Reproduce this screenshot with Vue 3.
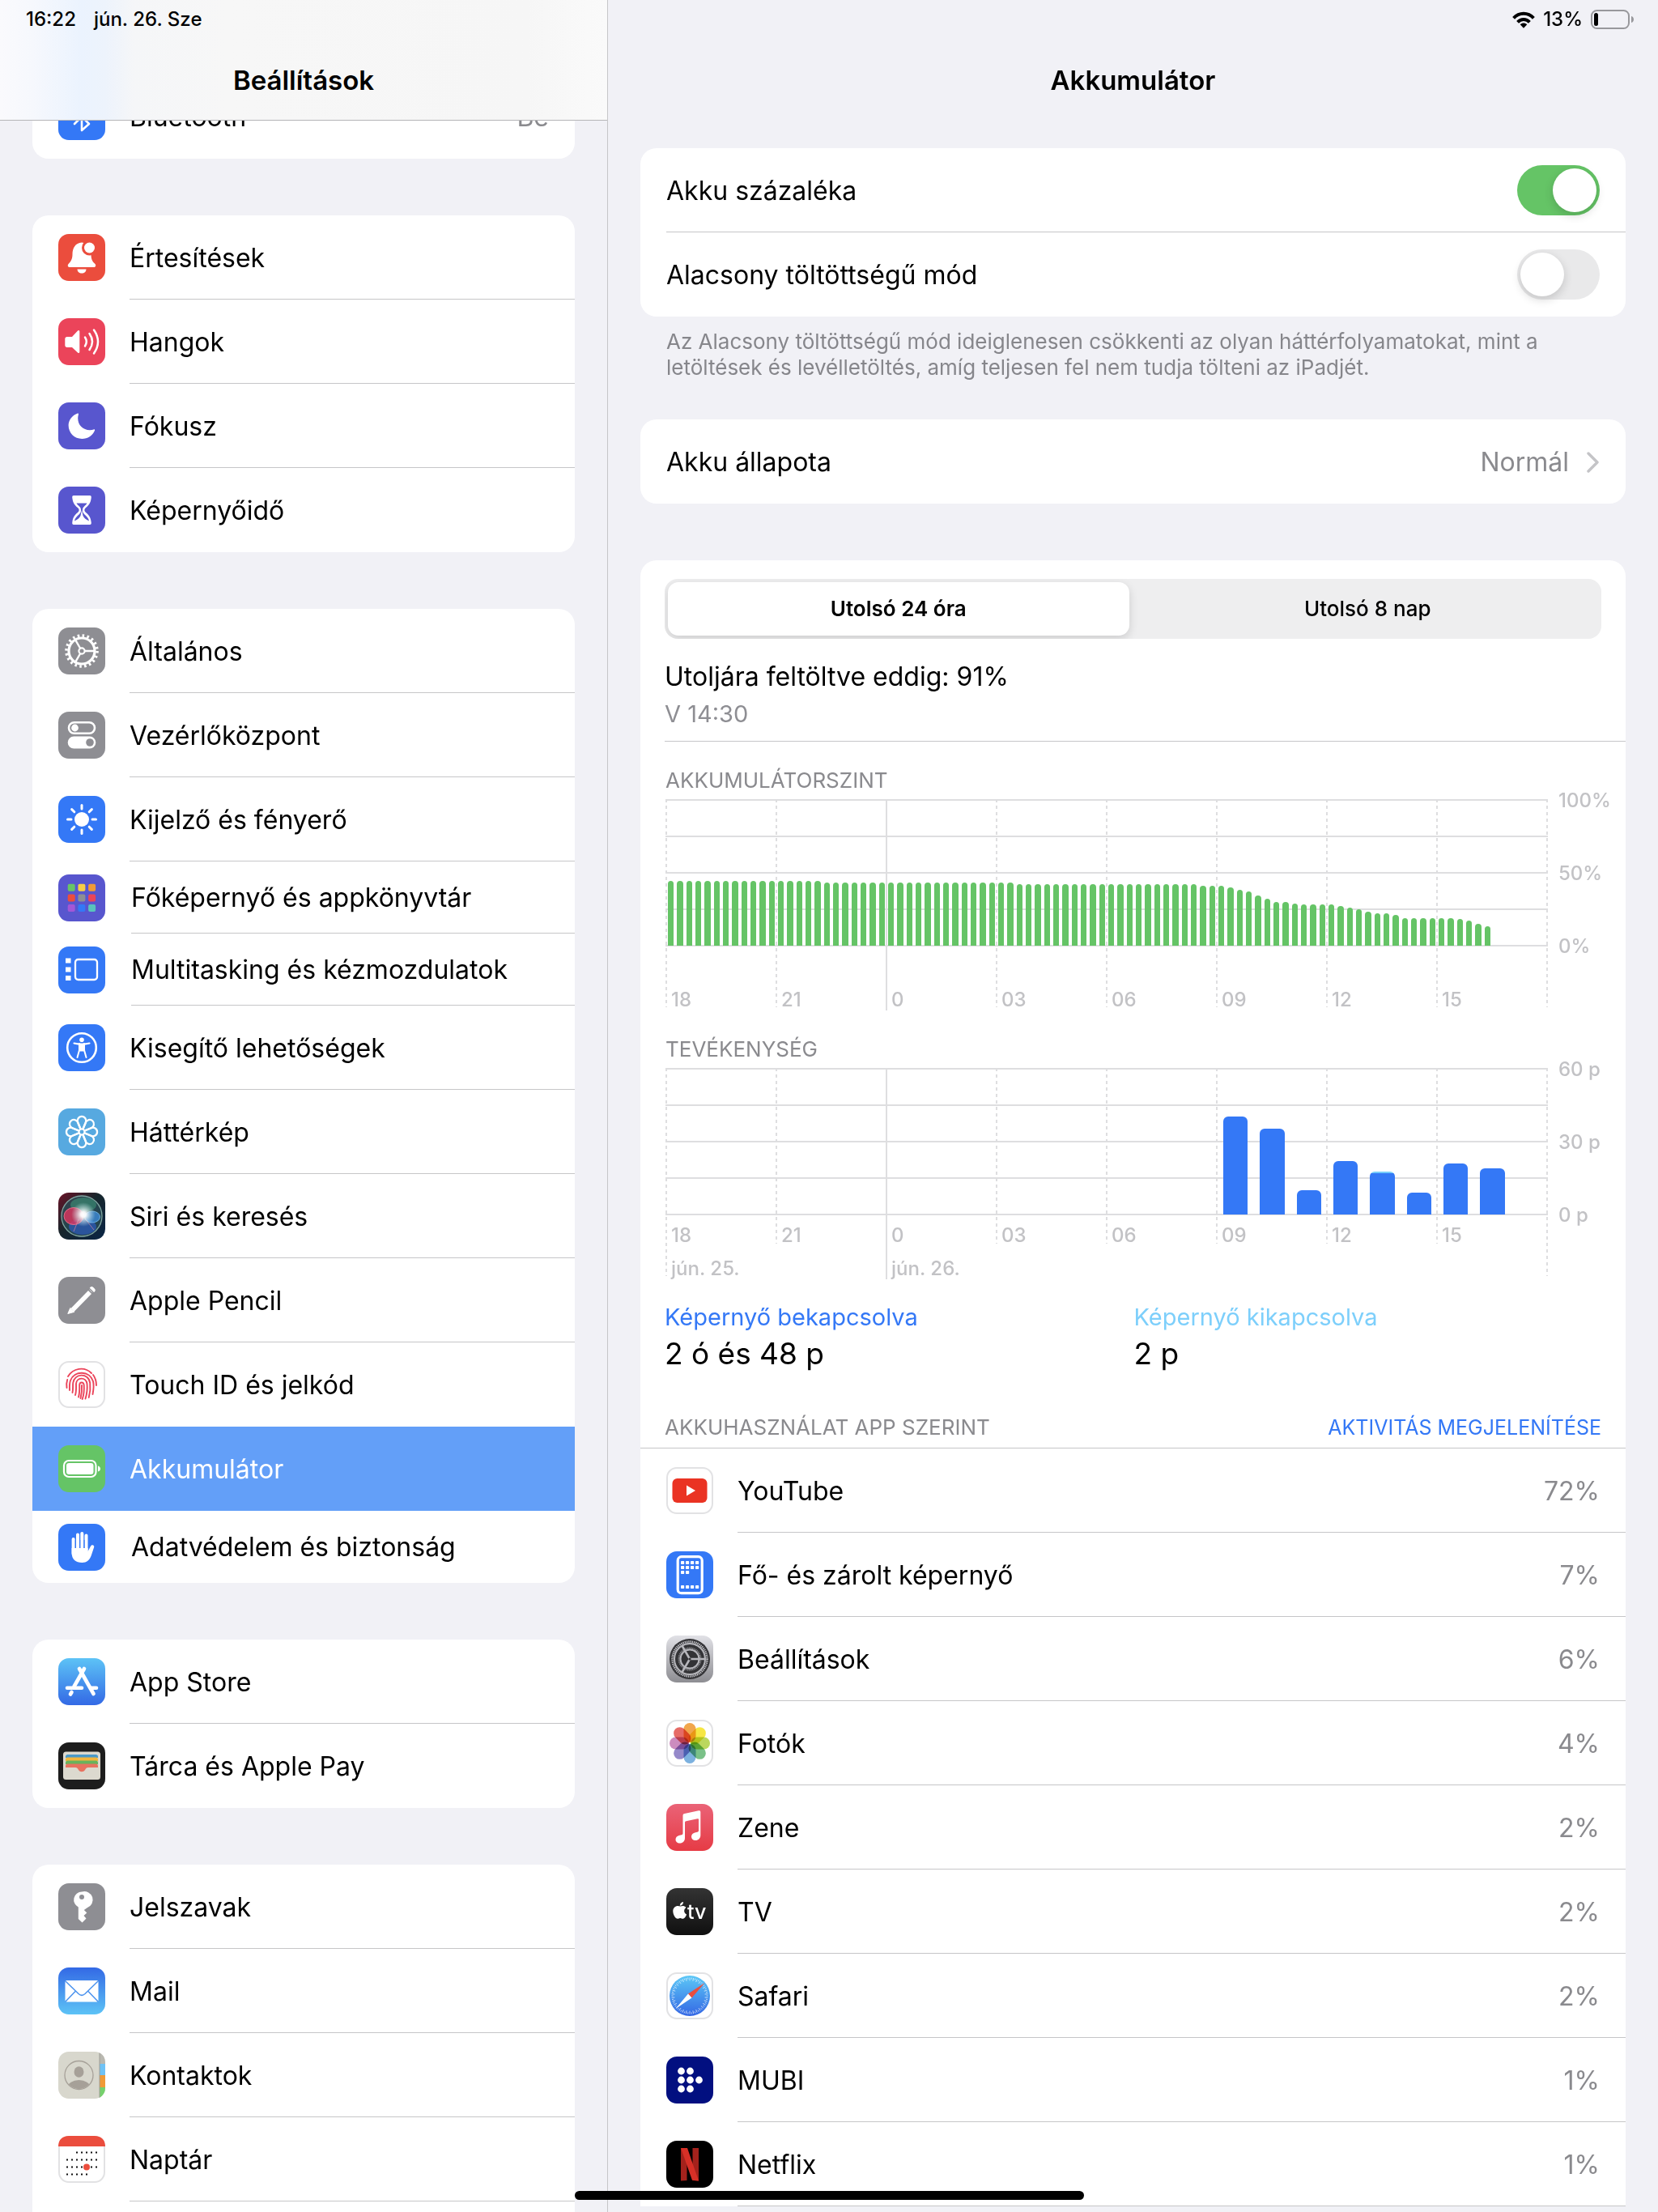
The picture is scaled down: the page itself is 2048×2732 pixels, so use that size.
<script setup>
import { ref } from 'vue'

const range = (n) => Array.from({ length: n }, (_, i) => i)
const rep = (n, v) => Array(n).fill(v)
const spin = (n, fn) => range(n).map((i) => fn((i * 360) / n, i)).join('')
const tile = (fill) => `<rect width="58" height="58" rx="13" fill="${fill}"/>`
const paperTile = '<rect x="1" y="1" width="56" height="56" rx="12" fill="#fff" stroke="#e2e2e4" stroke-width="2"/>'

const blue = '#3478f6'
const gray = '#8e8e93'
const indigo = '#5856ce'

const icons = {
  bluetooth: `${tile(blue)}<path d="M20 20l18 18-9 8V12l9 8-18 18" fill="none" stroke="#fff" stroke-width="2.6" stroke-linejoin="round" stroke-linecap="round"/>`,
  bell: `${tile('#eb4d3d')}<g fill="#fff"><path d="M29 10.500c-8 .5-11.500 7-11.500 14.500 0 6-2 9-4.500 11.500-2 2-1.500 4.500 1 4.500h30c2.500 0 3-2.500 1-4.500-3-2.500-4.500-5.500-4.500-11.500 0-7.500-3.500-14-11.500-14.500z"/><path d="M23.500 43.500h11c0 3-2.500 5-5.500 5s-5.500-2-5.500-5z"/></g><circle cx="38.500" cy="17" r="9.500" fill="#eb4d3d"/><circle cx="38.500" cy="17" r="6.500" fill="#fff"/>`,
  sound: `${tile('#eb445a')}<path d="M11 23h6l7-7.500c1-1 2.300-.5 2.300 1v25c0 1.500-1.300 2-2.300 1L17 36h-6c-1.700 0-2.700-1-2.700-2.700v-7.500C8.300 24 9.300 23 11 23z" fill="#fff"/><path d="M33 23.500q3.600 5.500 0 11M38.500 19q7 10 0 20M44 14.500q10 14.500 0 29" fill="none" stroke="#fff" stroke-width="2.500" stroke-linecap="round"/>`,
  moon: `${tile(indigo)}<path d="M23.500 13.700c1-.5 1.700.1 1.400 1.200-.4 1.300-.7 3-.7 4.600 0 8.500 6.300 14.700 14.800 14.700 1.700 0 3.400-.3 4.700-.8 1-.4 1.700.3 1.300 1.300-2.600 6.300-8.700 10.300-15.700 10.300-9.400 0-16.700-7.300-16.700-16.700 0-6.500 4.500-12.300 10.900-14.600z" fill="#fff"/>`,
  hourglass: `${tile(indigo)}<path d="M19 11h20c1.500 0 2 1 1.700 3-.8 6.500-3 9-6.700 12-2.200 1.800-2.200 4.200 0 6 3.700 3 5.900 5.500 6.700 12 .3 2-.2 3-1.700 3H19c-1.500 0-2-1-1.700-3 .8-6.500 3-9 6.700-12 2.200-1.800 2.200-4.200 0-6-3.700-3-5.900-5.500-6.700-12-.3-2 .2-3 1.700-3z" fill="#fff"/><path d="M22.500 20.500h13c-1 1.700-2.300 2.800-3.500 4-1.500 1.300-2 2.500-2 4.500s.5 3.500 2 5c3 2.500 5.500 5 6 8.500-3-1.500-6-3-7.500-6.500l-1.500-7-1.500 7C26 39.500 23 41 20 42.500c.5-3.500 3-6 6-8.500 1.500-1.500 2-3 2-5s-.5-3.200-2-4.500c-1.200-1.200-2.500-2.300-3.500-4z" fill="${indigo}"/>`,
  gear: `${tile(gray)}<g fill="none" stroke="#fff"><circle cx="29" cy="29" r="16" stroke-width="3.200"/><circle cx="29" cy="29" r="19" stroke-width="3.600" stroke-dasharray="2.600 3.370"/><circle cx="29" cy="29" r="3.600" stroke-width="2.200"/><path d="M33 29h12M27 25.500l-6-10.400M27 32.500l-6 10.400" stroke-width="2.400"/></g>`,
  switches: `${tile(gray)}<rect x="13" y="13.200" width="32" height="13.600" rx="6.800" fill="none" stroke="#fff" stroke-width="2.600"/><circle cx="20.500" cy="20" r="4.400" fill="#fff"/><rect x="11.700" y="30.500" width="34.600" height="15" rx="7.500" fill="#fff"/><circle cx="39" cy="38" r="4.800" fill="${gray}"/>`,
  sun: `${tile(blue)}<circle cx="29" cy="29" r="9" fill="#fff"/>${spin(8, (a) => `<path d="M29 11.500v4.500" transform="rotate(${a} 29 29)" stroke="#fff" stroke-width="3" stroke-linecap="round"/>`)}`,
  grid: `${tile(indigo)}${['#68c466', '#f7ce46', '#f19a37', '#eb4d3d', '#8e8e93', '#eb445a', '#a357d7', '#3478f6', '#59c4bc'].map((c, i) => `<rect x="${11.700 + (i % 3) * 12.700}" y="${11.700 + Math.floor(i / 3) * 12.700}" width="9" height="9" rx="2" fill="${c}"/>`).join('')}`,
  multitask: `${tile(blue)}<path d="M9 14.500h6.500v6H9zM9 25.500h6.500v6H9zM9 36h6.500v6H9z" fill="#fff"/><rect x="21" y="16" width="27" height="25" rx="3.500" fill="none" stroke="#fff" stroke-width="2.300"/>`,
  access: `${tile(blue)}<circle cx="29" cy="29" r="17.800" fill="none" stroke="#fff" stroke-width="2.600"/><circle cx="29" cy="19.300" r="2.800" fill="#fff"/><path d="M19.500 23.500c6 1.500 13 1.500 19 0" stroke="#fff" stroke-width="2.200" fill="none" stroke-linecap="round"/><path d="M32 24v8l2.500 9M26 24v8l-2.500 9M26.300 32.500h5.400" stroke="#fff" stroke-width="2" fill="none" stroke-linecap="round" stroke-linejoin="round"/><path d="M25.500 24h7v8.500h-7z" fill="#fff"/>`,
  flower: `${tile('#57a9e0')}<g fill="none" stroke="#fff" stroke-width="2.300" stroke-linejoin="round">${spin(8, (a) => `<path d="M27.500 25L24.200 17.500a5.300 5.300 0 1 1 9.600 0L30.500 25" transform="rotate(${a} 29 29)"/>`)}<circle cx="29" cy="29" r="3.600"/></g>`,
  siri: `<defs><linearGradient id="siriBg" x1="0" y1="0" x2="1" y2="1"><stop offset="0" stop-color="#6a1226"/><stop offset=".45" stop-color="#17262c"/><stop offset="1" stop-color="#0a2546"/></linearGradient><radialGradient id="siriGlow"><stop offset="0" stop-color="#fff"/><stop offset=".22" stop-color="#fff" stop-opacity=".95"/><stop offset="1" stop-color="#bfe6ea" stop-opacity="0"/></radialGradient></defs>${tile('url(#siriBg)')}<circle cx="29" cy="29" r="25" fill="#2b4f58" fill-opacity=".75" stroke="#7fa5a0" stroke-width="1.300"/><ellipse cx="31" cy="15" rx="16" ry="9" fill="#3f9a7c" fill-opacity=".55"/><ellipse cx="30" cy="42" rx="17" ry="10" fill="#2f5fd0" fill-opacity=".6"/><ellipse cx="19" cy="29" rx="12" ry="10.500" fill="#e0355f" fill-opacity=".8" stroke="#f27a94" stroke-width=".8"/><ellipse cx="42" cy="30" rx="9.500" ry="7" fill="#3f8fe0" fill-opacity=".75" stroke="#7cc0ee" stroke-width=".8"/><path d="M33 32l11 14M25 33l-6 15" stroke="#e88aa0" stroke-opacity=".6"/><circle cx="31" cy="27" r="15" fill="url(#siriGlow)"/>`,
  pencil: `${tile(gray)}<path d="M15.500 39L37 17l4 4-21.500 22z" fill="#fff"/><path d="M11.800 45.500l3-7 5 4.800z" fill="#fff" stroke="#fff" stroke-linejoin="round"/><path d="M41.300 14.900l1.500 1.500" stroke="#fff" stroke-width="5.600" stroke-linecap="round"/><path d="M37.500 13.500l7 7" stroke="${gray}" stroke-width="1.400"/>`,
  touch: `${paperTile}<g fill="none" stroke="#eb445a" stroke-width="1.900" stroke-linecap="round"><path d="M12 19c6-10 20-13 29-4"/><path d="M43 17c3 4 4 8 4 13"/><path d="M10.500 33c-.5-4-.3-7 .7-10"/><path d="M14 36c0-4-.5-8 1-12 5-13 24-12 28 1 1 4 .8 9-.5 16"/><path d="M17.500 39c1-5 .3-8 .7-12 1.500-12 19-13 21 0 .7 6 .2 12-1.500 18"/><path d="M21 42c1.500-5 1-10 1-14 .5-8 12-9 13.500 0 .6 6 0 12-2 18.500"/><path d="M25 44.500c1.500-5 1.300-11 1.200-15 .2-4 5-4 5.500 0 .4 6 0 12-2 17.500"/><path d="M29 30c.3 6-.3 11-1.500 16"/></g>`,
  battery: `${tile('#65c466')}<rect x="7" y="19" width="39.500" height="20" rx="6" fill="none" stroke="#fff" stroke-width="2.200"/><rect x="10" y="22" width="33.500" height="14" rx="3.300" fill="#fff"/><path d="M49 25.500c4 1 4 6 0 7z" fill="#fff"/>`,
  hand: `${tile(blue)}<g stroke="#fff" stroke-width="4" stroke-linecap="round" fill="none"><path d="M18.600 19v18M24 13.500V32M29.300 12v20M34.500 14.500V33"/></g><path d="M16.600 30h20v4l3.500-6.500c1.300-2.300 4.700-1.300 4.100 1.300l-3.500 10.500C38.700 45 35 48 29.500 48 21.500 48 16.600 44 16.600 36z" fill="#fff"/><path d="M21.300 20v10M26.700 20v10M32 20v10" stroke="${blue}" stroke-width="1"/>`,
  store: `<defs><linearGradient id="storeBg" x1="0" y1="0" x2="0" y2="1"><stop offset="0" stop-color="#5dc3f6"/><stop offset="1" stop-color="#3369e5"/></linearGradient></defs>${tile('url(#storeBg)')}<g stroke="#fff" stroke-width="4.600" stroke-linecap="round" fill="none"><path d="M32 13L19.500 35"/><path d="M26 13l17.500 31"/><path d="M11 36.700h18M40 36.700h7"/><path d="M16.500 42l-1.500 2.500"/></g>`,
  wallet: `${tile('#1d1d1d')}<rect x="6" y="11.500" width="46" height="34.500" rx="3.500" fill="#dcd9cf"/><path d="M9 19v-1.500c0-1.500 1-2.500 2.500-2.500h35c1.500 0 2.500 1 2.500 2.500V19z" fill="#4a9ac9"/><path d="M9 23v-2c0-1.500 1-2.500 2.500-2.500h35c1.500 0 2.500 1 2.500 2.500v2z" fill="#f2b53c"/><path d="M9 27v-2c0-1.500 1-2.500 2.500-2.500h35c1.500 0 2.500 1 2.500 2.500v2z" fill="#68b35c"/><path d="M9 31v-2c0-1.500 1-2.500 2.500-2.500h35c1.500 0 2.500 1 2.500 2.500v2H37c-2 0-3 1.300-4 3-1.800 3-6.200 3-8 0-1-1.700-2-3-4-3z" fill="#e8715f"/>`,
  key: `${tile(gray)}<path d="M29 10.500a10 10 0 0 0-4.200 19V44l4.700 4.500 5-5-3-3.500 3.800-3.500-3.500-3.500 3.500-2.500a10 10 0 0 0-6.300-20z" fill="#fff"/><circle cx="29" cy="17" r="3" fill="${gray}"/>`,
  mail: `<defs><linearGradient id="mailBg" x1="0" y1="0" x2="0" y2="1"><stop offset="0" stop-color="#3369e5"/><stop offset="1" stop-color="#5dc3f6"/></linearGradient></defs>${tile('url(#mailBg)')}<rect x="8.500" y="16" width="41" height="26.500" rx="2" fill="#fff"/><path d="M9 17l16 15.500c2.500 2.300 5.500 2.300 8 0L49 17M9 42l12.500-13M49 42L36.500 29" fill="none" stroke="#4a92ee" stroke-width="1.500"/>`,
  contacts: `<defs><clipPath id="contactsClip"><rect width="58" height="58" rx="13"/></clipPath><clipPath id="contactsFace"><circle cx="25.500" cy="29" r="17"/></clipPath></defs><g clip-path="url(#contactsClip)"><path d="M0 0h58v58H0z" fill="#d8d7cd"/><path d="M51 0h7v15h-7z" fill="#b9b8b0"/><path d="M51 15h7v14h-7z" fill="#6fc2f5"/><path d="M51 29h7v15h-7z" fill="#f09a37"/><path d="M51 44h7v14h-7z" fill="#75d16c"/><path d="M51 0v58" stroke="#9d9c95"/></g><circle cx="25.500" cy="29" r="17.500" fill="none" stroke="#a6a098" stroke-width="1.300"/><g clip-path="url(#contactsFace)" fill="#a6a098"><ellipse cx="25.500" cy="25" rx="6" ry="6.800"/><ellipse cx="25.500" cy="44" rx="14" ry="9"/></g>`,
  calendar: `${paperTile}<path d="M0 13C0 5 5 0 13 0h32c8 0 13 5 13 13z" fill="#eb4d3d"/><g fill="#111">${[[22, 20.500, 5], [10, 29.500, 7], [10, 38.500, 7], [10, 47.500, 5]].map(([x, y, n]) => range(n).map((i) => `<rect x="${x + i * 6}" y="${y - 1}" width="2" height="2"/>`).join('')).join('')}</g><circle cx="35" cy="38.500" r="4" fill="#eb4d3d"/>`,
  youtube: `${paperTile}<rect x="7.500" y="14" width="43" height="30" rx="6" fill="#ea3323"/><path d="M25 22.500v13L36 29z" fill="#fff"/>`,
  home: `${tile(blue)}<rect x="14.200" y="6.700" width="30" height="45" rx="4.500" fill="none" stroke="#fff" stroke-width="3.200"/><g fill="#fff">${[[0, 0], [1, 0], [2, 0], [3, 0], [0, 1], [1, 1], [2, 1], [3, 1], [0, 2], [1, 2], [0, 5], [1, 5], [2, 5], [3, 5]].map(([x, y]) => `<rect x="${18 + x * 6}" y="${12 + y * 6}" width="4.200" height="4" rx=".8"/>`).join('')}</g>`,
  settings: `<defs><linearGradient id="setBg" x1="0" y1="0" x2="0" y2="1"><stop offset="0" stop-color="#e1e1e6"/><stop offset="1" stop-color="#8d8d92"/></linearGradient></defs>${tile('url(#setBg)')}<circle cx="29" cy="29" r="25" fill="#333336"/><circle cx="29" cy="29" r="21.500" fill="none" stroke="#c3c3c8" stroke-width="2.500" stroke-dasharray="1.300 1"/><circle cx="29" cy="29" r="19" fill="none" stroke="#b7b7bc" stroke-width="2"/><circle cx="29" cy="29" r="13" fill="none" stroke="#8a8a8e" stroke-width="3" stroke-dasharray="1.200 .8"/><circle cx="29" cy="29" r="11.500" fill="none" stroke="#b7b7bc" stroke-width="2"/><g stroke="#b7b7bc" stroke-width="2.600"><path d="M29 29h19M29 29l-9.500-16.400M29 29l-9.500 16.400"/></g><circle cx="29" cy="29" r="1.600" fill="#333336"/>`,
  photos: `${paperTile}<g style="isolation:isolate">${['#f09c38', '#f5e32f', '#b4d34d', '#6cba7b', '#6ea9dc', '#8a7cc4', '#c77fb8', '#e35b55'].map((c, i) => `<rect x="21.500" y="4" width="15" height="24" rx="7.500" fill="${c}" fill-opacity=".9" style="mix-blend-mode:multiply" transform="rotate(${i * 45} 29 29)"/>`).join('')}</g>`,
  music: `<defs><linearGradient id="musicBg" x1="0" y1="0" x2="0" y2="1"><stop offset="0" stop-color="#ea6377"/><stop offset="1" stop-color="#e63b45"/></linearGradient></defs>${tile('url(#musicBg)')}<path d="M20.500 14.500c0-1.500.6-2.200 2-2.500l17.500-3.700c1.300-.3 2.300.4 2.300 1.700v28.500c0 4-2.600 6.500-6.300 6.500-3 0-5-2-5-4.500 0-2.800 2-4.500 5-5.200l2.300-.5c1.200-.3 1.700-.8 1.700-2V19.500c0-1-.5-1.400-1.500-1.200l-14 3c-1 .2-1.500.7-1.500 1.700v19c0 4-2.600 6.500-6.300 6.500-3 0-5.200-2-5.200-4.500 0-2.800 2-4.500 5-5.200l2.300-.5c1.200-.3 1.700-.8 1.700-2z" fill="#fff"/>`,
  tv: `<defs><linearGradient id="tvBg" x1="0" y1="0" x2="0" y2="1"><stop offset="0" stop-color="#333"/><stop offset="1" stop-color="#101010"/></linearGradient></defs>${tile('url(#tvBg)')}<path d="M17.500 22.600c2.200-1.200 5.200-.9 6.900 1.300-3.300 2-2.800 7 .7 8.500-.9 2.600-2.700 5.300-4.700 5.300-1.200 0-1.700-.8-3.200-.8s-2.100.8-3.200.8c-2.700 0-5.700-5.300-5.700-9.300 0-5.400 4.800-7.800 9.200-5.800z" fill="#fff"/><path d="M16.800 21.700c0-2.500 1.700-4.300 4.200-4.700.2 2.500-1.700 4.600-4.200 4.700z" fill="#fff"/><text x="26" y="37.500" font-family="Inter, sans-serif" font-size="25" font-weight="500" fill="#fff">tv</text>`,
  safari: `<defs><linearGradient id="safBg" x1="0" y1="0" x2="0" y2="1"><stop offset="0" stop-color="#5cc8f7"/><stop offset="1" stop-color="#3467e4"/></linearGradient></defs>${paperTile}<circle cx="29" cy="29" r="25" fill="url(#safBg)"/>${spin(60, (a, i) => `<path d="M29 6.500v${i % 2 ? 2 : 3.800}" transform="rotate(${a} 29 29)" stroke="#fff" stroke-width=".7" stroke-opacity=".9"/>`)}<path d="M47.500 13L27 26.500l4.500 5z" fill="#eb4d3d"/><path d="M11.500 45L27 26.500l4.500 5z" fill="#fff"/>`,
  mubi: `${tile('#020f80')}<g fill="#fff">${[[18.500, 18], [29.500, 18], [18.500, 29], [29.500, 29], [40.500, 29], [18.500, 40], [29.500, 40]].map(([x, y]) => `<circle cx="${x}" cy="${y}" r="4.400"/>`).join('')}</g>`,
  netflix: `${tile('#000')}<path d="M18 9h7.500v40l-7.500.5zM32.500 9H40v40.500l-7.500-.5z" fill="#a4221c"/><path d="M18 9h8l14 40.500-8-.8z" fill="#d73027"/>`
}

const groups = [
  [{ label: 'Bluetooth', icon: 'bluetooth', value: 'Be' }],
  [
    { label: 'Értesítések', icon: 'bell' },
    { label: 'Hangok', icon: 'sound' },
    { label: 'Fókusz', icon: 'moon' },
    { label: 'Képernyőidő', icon: 'hourglass' }
  ],
  [
    { label: 'Általános', icon: 'gear' },
    { label: 'Vezérlőközpont', icon: 'switches' },
    { label: 'Kijelző és fényerő', icon: 'sun' },
    { label: 'Főképernyő és appkönyvtár', icon: 'grid', compact: true },
    { label: 'Multitasking és kézmozdulatok', icon: 'multitask', compact: true },
    { label: 'Kisegítő lehetőségek', icon: 'access' },
    { label: 'Háttérkép', icon: 'flower' },
    { label: 'Siri és keresés', icon: 'siri' },
    { label: 'Apple Pencil', icon: 'pencil' },
    { label: 'Touch ID és jelkód', icon: 'touch' },
    { label: 'Akkumulátor', icon: 'battery', active: true },
    { label: 'Adatvédelem és biztonság', icon: 'hand', compact: true }
  ],
  [
    { label: 'App Store', icon: 'store' },
    { label: 'Tárca és Apple Pay', icon: 'wallet' }
  ],
  [
    { label: 'Jelszavak', icon: 'key' },
    { label: 'Mail', icon: 'mail' },
    { label: 'Kontaktok', icon: 'contacts' },
    { label: 'Naptár', icon: 'calendar' },
    { label: '', icon: '' }
  ]
]

const apps = [
  { name: 'YouTube', icon: 'youtube', share: 72 },
  { name: 'Fő- és zárolt képernyő', icon: 'home', share: 7 },
  { name: 'Beállítások', icon: 'settings', share: 6 },
  { name: 'Fotók', icon: 'photos', share: 4 },
  { name: 'Zene', icon: 'music', share: 2 },
  { name: 'TV', icon: 'tv', share: 2 },
  { name: 'Safari', icon: 'safari', share: 2 },
  { name: 'MUBI', icon: 'mubi', share: 1 },
  { name: 'Netflix', icon: 'netflix', share: 1 }
]

const hours = ['18', '21', '0', '03', '06', '09', '12', '15', '']
const dates = { 0: 'jún. 25.', 2: 'jún. 26.' }

// Charge in percent, one value per quarter of an hour from 18:00
const levels = [
  ...rep(17, 44), ...rep(21, 43), ...rep(20, 42), ...rep(3, 41),
  40, 38, 37, 34, 32, 30, 30, 29, ...rep(4, 28), 27, 26, 25, 23, 22, 22, 21,
  ...rep(6, 19), 18, 17, 15, 13
]

// Minutes of use in each hour, counted from 18:00
const activity = [
  ...rep(15, { on: 0, off: 0 }),
  { on: 40, off: 0 }, { on: 35, off: 0 }, { on: 10, off: 0 }, { on: 22, off: 0 },
  { on: 17, off: 1 }, { on: 9, off: 0 }, { on: 21, off: 0 }, { on: 19, off: 0 }
]

const period = ref('day')
const showPercent = ref(true)
const lowPower = ref(false)
</script>

<template>
  <div class="screen">
    <aside class="sidebar">
      <header class="sidebar-head">
        <div class="status"><span>16:22</span><span>jún. 26. Sze</span></div>
        <h1 class="title">Beállítások</h1>
      </header>
      <nav class="groups">
        <ul v-for="(group, g) in groups" :key="g" class="card">
          <li v-for="item in group" :key="item.icon">
            <a href="#" class="row" :class="{ compact: item.compact, active: item.active }">
              <svg class="icon" viewBox="0 0 58 58" aria-hidden="true" v-html="icons[item.icon] || ''"></svg>
              <span class="row-body">
                <span>{{ item.label }}</span>
                <span v-if="item.value" class="muted">{{ item.value }}</span>
              </span>
            </a>
          </li>
        </ul>
      </nav>
    </aside>

    <main class="detail">
      <header class="detail-head">
        <div class="status status-right">
          <svg width="28" height="21" viewBox="0 0 28 21" aria-hidden="true">
            <g fill="none" stroke="#000" stroke-width="4">
              <path d="M1.600 8.300C8.500 1 19.500 1 26.400 8.300" />
              <path d="M6.600 13.300c4.200-4.300 10.600-4.300 14.800 0" />
            </g>
            <path d="M14 20.800l-4.300-4.500c2.500-2.300 6.100-2.300 8.600 0z" />
          </svg>
          <span>13%</span>
          <svg width="54" height="24" viewBox="0 0 54 24" aria-hidden="true">
            <rect x="1" y="1" width="46" height="22" rx="6.500" fill="none" stroke="#98989c" stroke-width="2" />
            <rect x="4" y="4" width="5" height="16" rx="2.500" />
            <path d="M50 8c4 1 4 7 0 8z" fill="#98989c" />
          </svg>
        </div>
        <h2 class="title">Akkumulátor</h2>
      </header>

      <section class="card">
        <label class="setting">
          <span>Akku százaléka</span>
          <input v-model="showPercent" class="switch" type="checkbox" role="switch" />
        </label>
        <label class="setting">
          <span>Alacsony töltöttségű mód</span>
          <input v-model="lowPower" class="switch" type="checkbox" role="switch" />
        </label>
      </section>
      <p class="note">
        Az Alacsony töltöttségű mód ideiglenesen csökkenti az olyan háttérfolyamatokat, mint a
        letöltések és levélletöltés, amíg teljesen fel nem tudja tölteni az iPadjét.
      </p>

      <section class="card">
        <a href="#" class="setting">
          <span>Akku állapota</span>
          <span class="health muted">
            Normál
            <svg width="16" height="26" viewBox="0 0 16 26" aria-hidden="true">
              <path d="M2 2l11 11L2 24" fill="none" stroke="#c4c4c7" stroke-width="3.400" stroke-linecap="round" stroke-linejoin="round" />
            </svg>
          </span>
        </a>
      </section>

      <section class="card usage">
        <div class="segments">
          <button type="button" :class="{ on: period === 'day' }" @click="period = 'day'">Utolsó 24 óra</button>
          <button type="button" :class="{ on: period === 'week' }" @click="period = 'week'">Utolsó 8 nap</button>
        </div>

        <div class="charged">
          <p>Utoljára feltöltve eddig: 91%</p>
          <p class="sub">V 14:30</p>
        </div>

        <div class="chart">
          <h3 class="caption">AKKUMULÁTORSZINT</h3>
          <div class="chart-area">
            <div class="plot">
              <div class="lines"></div>
              <div class="ticks">
                <div v-for="(h, i) in hours" :key="i" class="tick" :class="{ solid: i === 2 }"><span>{{ h }}</span></div>
              </div>
              <div class="bars quarter">
                <i v-for="(v, i) in levels" :key="i" :style="{ height: v + '%' }"></i>
              </div>
            </div>
            <div class="scale"><span>100%</span><span>50%</span><span>0%</span></div>
          </div>
        </div>

        <div class="chart">
          <h3 class="caption">TEVÉKENYSÉG</h3>
          <div class="chart-area">
            <div class="plot">
              <div class="lines"></div>
              <div class="ticks dated">
                <div v-for="(h, i) in hours" :key="i" class="tick" :class="{ solid: i === 2, short: !dates[i] && h }">
                  <span>{{ h }}</span>
                  <span v-if="dates[i]">{{ dates[i] }}</span>
                </div>
              </div>
              <div class="bars hourly">
                <i v-for="(v, i) in activity" :key="i" :class="{ mixed: v.off }" :style="{ height: (v.on + v.off / 2) / 0.6 + '%' }"></i>
              </div>
            </div>
            <div class="scale"><span>60 p</span><span>30 p</span><span>0 p</span></div>
          </div>
        </div>

        <dl class="totals">
          <div>
            <dt class="on">Képernyő bekapcsolva</dt>
            <dd>2 ó és 48 p</dd>
          </div>
          <div>
            <dt class="off">Képernyő kikapcsolva</dt>
            <dd>2 p</dd>
          </div>
        </dl>

        <div class="apps-head">
          <h3 class="caption">AKKUHASZNÁLAT APP SZERINT</h3>
          <button type="button" class="link">AKTIVITÁS MEGJELENÍTÉSE</button>
        </div>
        <ul class="apps">
          <li v-for="app in apps" :key="app.name" class="row">
            <svg class="icon" viewBox="0 0 58 58" aria-hidden="true" v-html="icons[app.icon]"></svg>
            <span class="row-body">
              <span>{{ app.name }}</span>
              <span class="muted">{{ app.share }}%</span>
            </span>
          </li>
        </ul>
      </section>
    </main>

    <div class="home-bar"></div>
  </div>
</template>

<style>
body {
  margin: 0;
  background: #f1f1f6;
}
</style>

<style scoped>
.screen {
  position: relative;
  display: grid;
  grid-template-columns: 751px 1fr;
  height: 100vh;
  overflow: hidden;
  background: #f1f1f6;
  color: #000;
  font-family: Inter, "Liberation Sans", sans-serif;
  font-size: 32px;
  line-height: 40px;
}

h1, h2, h3, p, ul, dl, dd {
  margin: 0;
  padding: 0;
}

ul {
  list-style: none;
}

a {
  color: inherit;
  text-decoration: none;
}

button {
  padding: 0;
  border: 0;
  background: none;
  color: inherit;
  font: inherit;
}

.sidebar {
  position: relative;
  box-sizing: border-box;
  border-right: 1px solid #c6c6c8;
  overflow: hidden;
}

.sidebar-head {
  position: absolute;
  inset: 0 0 auto;
  z-index: 1;
  border-bottom: 1px solid #b5b5b7;
  background: linear-gradient(90deg, #fafafd 0, #f6f8fd 40px, #ebf3fe 100px, #edf3fc 130px, #f5f6f8 165px, #f7f7f7 280px, #f6f6f6 650px, #fafafa 750px);
}

.status {
  display: flex;
  gap: 22px;
  height: 28px;
  padding: 10px 32px 0;
  font-size: 24px;
  font-weight: 500;
  line-height: 28px;
}

.status-right {
  align-items: center;
  justify-content: flex-end;
  gap: 10px;
  padding-right: 29px;
}

.title {
  padding: 41px 0 29px;
  font-size: 33px;
  font-weight: 600;
  line-height: 40px;
  text-align: center;
}

.groups {
  display: flex;
  flex-direction: column;
  gap: 70px;
  padding: 92px 40px 0;
}

.card {
  border-radius: 20px;
  background: #fff;
  overflow: hidden;
}

.row {
  display: flex;
  align-items: stretch;
  gap: 30px;
  height: 104px;
  padding-left: 32px;
}

.row.compact {
  gap: 32px;
  height: 89px;
}

.icon {
  flex: none;
  align-self: center;
  width: 58px;
  height: 58px;
}

.row-body {
  display: flex;
  flex: 1;
  align-items: center;
  justify-content: space-between;
  padding: 2px 32px 0 0;
  border-bottom: 1px solid #c6c6c8;
}

li:last-child .row-body {
  border-bottom-color: transparent;
}

li:has(+ li .active) .row-body,
.active .row-body {
  border-bottom-color: transparent;
}

.row.active {
  background: #639ff8;
  color: #fff;
}

.muted {
  color: #8a8a8e;
}

.detail {
  padding: 0 40px;
  overflow: hidden;
}

.detail-head {
  height: 149px;
  margin: 0 -40px 34px;
}

.setting {
  display: flex;
  align-items: center;
  justify-content: space-between;
  height: 104px;
  margin-left: 32px;
  padding-right: 32px;
}

.setting > span {
  padding-top: 2px;
}

.setting + .setting {
  box-shadow: 0 -1px #c6c6c8;
}

.switch {
  appearance: none;
  display: flex;
  box-sizing: border-box;
  width: 102px;
  height: 62px;
  margin: 0;
  padding: 4px;
  border-radius: 31px;
  background: #e9e9ea;
}

.switch::before {
  content: "";
  width: 54px;
  height: 54px;
  border-radius: 50%;
  background: #fff;
  box-shadow: 0 4px 12px rgba(0, 0, 0, 0.16);
}

.switch:checked {
  justify-content: flex-end;
  background: #65c466;
}

.note {
  padding: 15px 32px 48px;
  color: #86868b;
  font-size: 26px;
  line-height: 32px;
}

.health {
  display: flex;
  align-items: center;
  gap: 22px;
}

.usage {
  margin-top: 70px;
  padding-top: 23px;
  border-radius: 20px 20px 0 0;
}

.segments {
  display: grid;
  grid-template-columns: 1fr 1fr;
  column-gap: 10px;
  box-sizing: border-box;
  height: 74px;
  margin: 0 30px;
  padding: 4px;
  border-radius: 16px;
  background: #eeeeef;
  overflow: hidden;
}

.segments button {
  border-radius: 13px;
  font-size: 26px;
  font-weight: 500;
}

.segments .on {
  background: #fff;
  font-weight: 600;
  box-shadow: 0 4px 12px rgba(0, 0, 0, 0.14);
}

.charged {
  margin-left: 30px;
  padding: 24px 0 10px;
  border-bottom: 1px solid #c6c6c8;
  line-height: 46px;
}

.sub {
  color: #8e8e93;
  font-size: 29px;
}

.chart {
  padding: 32px 0 0 31px;
}

.caption {
  color: #8a8a8e;
  font-size: 26px;
  font-weight: 400;
  line-height: 32px;
}

.chart-area {
  display: grid;
  grid-template-columns: 1fr 96px;
  margin-top: 7px;
}

.plot {
  display: grid;
  height: 261px;
}

.lines,
.ticks,
.bars {
  grid-area: 1 / 1;
}

.lines {
  height: 182px;
  background: repeating-linear-gradient(#dedee0 0 2px, transparent 2px 45px);
}

.ticks {
  display: grid;
  grid-template-columns: repeat(8, 1fr) 2px;
}

.tick {
  display: flex;
  flex-direction: column;
  box-sizing: border-box;
  height: 257px;
  padding: 227px 0 0 7px;
  background: repeating-linear-gradient(#dedee0 0 4px, transparent 4px 8px) 0 0 / 2px 100% no-repeat;
  color: #c2c2c5;
  font-size: 24px;
  font-weight: 500;
  line-height: 41px;
}

.tick:last-child {
  padding-left: 2px;
}

.tick.solid {
  height: 261px;
  background: linear-gradient(#dedee0, #dedee0) 0 0 / 2px 100% no-repeat;
}

.dated .tick {
  padding-top: 186px;
}

.dated .short {
  height: 217px;
}

.bars {
  display: grid;
  align-items: end;
  height: 181px;
  padding-right: 2px;
}

.quarter {
  grid-template-columns: repeat(96, 1fr);
}

.quarter i {
  margin: 0 1px 0 3px;
  border-radius: 4px 4px 0 0;
  background: #65c466;
}

.hourly {
  grid-template-columns: repeat(24, 1fr);
}

.hourly i {
  margin: 0 6px 0 9px;
  border-radius: 6px 6px 0 0;
  background: #3478f6;
}

.hourly .mixed {
  background: linear-gradient(#76cdfb 2px, #3478f6 2px);
}

.scale {
  display: flex;
  flex-direction: column;
  justify-content: space-between;
  height: 208px;
  margin-top: -12px;
  padding-left: 13px;
  color: #c2c2c5;
  font-size: 24px;
  font-weight: 500;
  line-height: 28px;
}

.totals {
  display: grid;
  grid-template-columns: 1fr 1fr;
  margin: 27px 0 0 30px;
  padding-right: 28px;
}

dt {
  font-size: 29px;
}

dt.on {
  color: #3478f6;
}

dt.off {
  color: #7dcffb;
}

dd {
  font-size: 37px;
  line-height: 50px;
}

.apps-head {
  display: flex;
  align-items: center;
  justify-content: space-between;
  margin-top: 50px;
  padding: 0 30px 9px;
  border-bottom: 1px solid #c6c6c8;
}

.link {
  color: #3478f6;
  font-size: 25px;
  line-height: 32px;
}

.apps .row:last-child .row-body {
  border-bottom-color: #c6c6c8;
}

.home-bar {
  position: absolute;
  bottom: 15px;
  left: 50%;
  width: 629px;
  height: 11px;
  margin-left: -314px;
  border-radius: 6px;
  background: #000;
}
</style>
